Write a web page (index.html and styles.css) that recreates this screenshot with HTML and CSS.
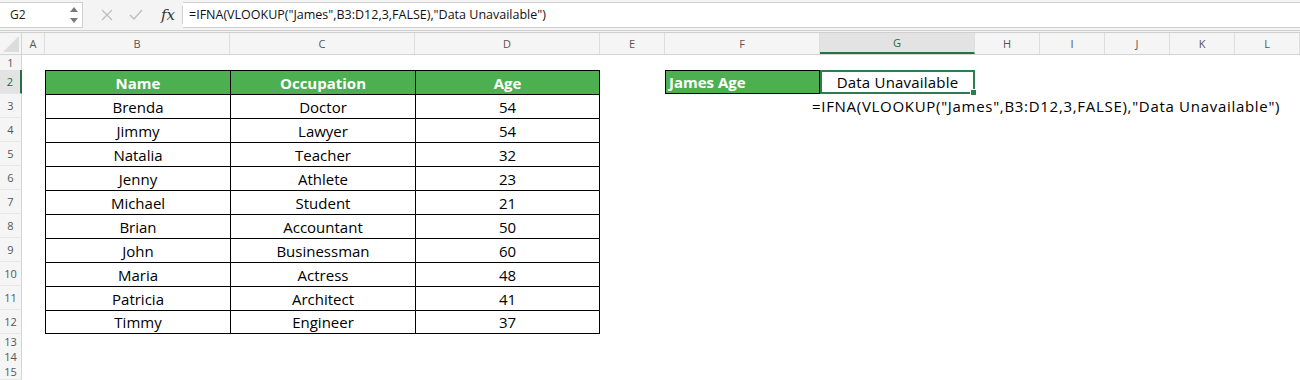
FILE: index.html
```html
<!DOCTYPE html>
<html>
<head>
<meta charset="utf-8">
<link rel="stylesheet" href="styles.css">
</head>
<body>
<div class="app">
  <div class="fbar">
    <div class="namebox">
      <span>G2</span>
      <svg class="spin" width="8" height="18" viewBox="0 0 8 18"><path d="M0 6 L4 1 L8 6 Z" fill="#7a7a7a"/><path d="M0 12 L4 17 L8 12 Z" fill="#7a7a7a"/></svg>
    </div>
    <div class="fbtns">
      <svg class="btn" width="12" height="12" viewBox="0 0 12 12"><path d="M1 1 L11 11 M11 1 L1 11" stroke="#bdbdbd" stroke-width="1.3" fill="none"/></svg>
      <svg class="btn" width="14" height="12" viewBox="0 0 14 12"><path d="M1 6 L5 10 L13 1" stroke="#bdbdbd" stroke-width="1.3" fill="none"/></svg>
      <span class="fx">fx</span>
    </div>
    <div class="finput">=IFNA(VLOOKUP("James",B3:D12,3,FALSE),"Data Unavailable")</div>
  </div>
  <div class="sheet">
    <div class="row colhdr">
      <div class="corner"><svg width="16" height="16" viewBox="0 0 16 16"><path d="M16 0 L16 16 L0 16 Z" fill="#dcdcdc"/></svg></div>
      <div class="ch">A</div><div class="ch">B</div><div class="ch">C</div><div class="ch">D</div><div class="ch">E</div><div class="ch">F</div><div class="ch sel">G</div><div class="ch">H</div><div class="ch">I</div><div class="ch">J</div><div class="ch">K</div><div class="ch">L</div>
    </div>
    <div class="row small"><div class="rh">1</div></div>
    <div class="row tall">
      <div class="rh sel">2</div><div></div>
      <div class="tc th">Name</div><div class="tc th">Occupation</div><div class="tc th last">Age</div>
      <div></div>
      <div class="label">James Age</div>
      <div class="active">Data Unavailable<span class="handle"></span></div>
    </div>
    <div class="row tall">
      <div class="rh">3</div><div></div>
      <div class="tc">Brenda</div><div class="tc">Doctor</div><div class="tc last">54</div>
      <div></div>
      <div class="ftext">=IFNA(VLOOKUP("James",B3:D12,3,FALSE),"Data Unavailable")</div>
    </div>
    <div class="row tall"><div class="rh">4</div><div></div><div class="tc">Jimmy</div><div class="tc">Lawyer</div><div class="tc last">54</div></div>
    <div class="row tall"><div class="rh">5</div><div></div><div class="tc">Natalia</div><div class="tc">Teacher</div><div class="tc last">32</div></div>
    <div class="row tall"><div class="rh">6</div><div></div><div class="tc">Jenny</div><div class="tc">Athlete</div><div class="tc last">23</div></div>
    <div class="row tall"><div class="rh">7</div><div></div><div class="tc">Michael</div><div class="tc">Student</div><div class="tc last">21</div></div>
    <div class="row tall"><div class="rh">8</div><div></div><div class="tc">Brian</div><div class="tc">Accountant</div><div class="tc last">50</div></div>
    <div class="row tall"><div class="rh">9</div><div></div><div class="tc">John</div><div class="tc">Businessman</div><div class="tc last">60</div></div>
    <div class="row tall"><div class="rh">10</div><div></div><div class="tc">Maria</div><div class="tc">Actress</div><div class="tc last">48</div></div>
    <div class="row tall"><div class="rh">11</div><div></div><div class="tc">Patricia</div><div class="tc">Architect</div><div class="tc last">41</div></div>
    <div class="row tall bottom"><div class="rh">12</div><div></div><div class="tc">Timmy</div><div class="tc">Engineer</div><div class="tc last">37</div></div>
    <div class="row small"><div class="rh">13</div></div>
    <div class="row small"><div class="rh">14</div></div>
    <div class="row small"><div class="rh">15</div></div>
  </div>
</div>
</body>
</html>
```
FILE: styles.css
```css
* { box-sizing: border-box; }
html, body { margin: 0; padding: 0; background: #fff; }
body { width: 1300px; height: 380px; overflow: hidden; font-family: "Open Sans", sans-serif; }

.fbar {
  height: 33px;
  display: flex;
  align-items: center;
  background: #f4f4f4;
  padding: 3px 0 4px 0;
  border-bottom: 3px double #cfcfcf;
}
.namebox {
  width: 83px;
  height: 26px;
  background: #fff;
  border: 1px solid #d0d0d0;
  border-left: none;
  display: flex;
  align-items: center;
  justify-content: space-between;
  padding: 0 4px 0 10px;
  font-size: 12px;
  color: #222;
}
.fbtns {
  display: flex;
  align-items: center;
  width: 100px;
  height: 26px;
  padding-left: 18px;
}
.fbtns .btn:first-child { margin-right: 16px; }
.fx {
  margin-left: 18px;
  font-family: "DejaVu Serif", serif;
  font-style: italic;
  font-size: 15px;
  color: #333;
  padding-right: 7px;
  border-right: 1px solid #d0d0d0;
  line-height: 18px;
}
.finput {
  flex: 1;
  height: 26px;
  background: #fff;
  border-top: 1px solid #d0d0d0;
  border-bottom: 1px solid #d0d0d0;
  display: flex;
  align-items: center;
  padding-left: 6px;
  font-size: 12.5px;
  color: #111;
}

.row {
  display: grid;
  grid-template-columns: 22px 23px 185px 185px 185px 65px 155px 155px 65px 65px 65px 65px 65px;
}
.colhdr { height: 22px; background: #f5f5f5; border-bottom: 1px solid #d4d4d4; }
.small { height: 15px; }
.tall { height: 24px; }

.corner {
  display: flex;
  align-items: flex-end;
  justify-content: flex-end;
  padding: 0 2px 2px 0;
  border-right: 1px solid #d4d4d4;
}
.ch {
  display: flex;
  align-items: center;
  justify-content: center;
  font-size: 11px;
  color: #555;
  border-right: 1px solid #dedede;
}
.ch.sel {
  background: #e3e3e3;
  color: #1f6b3e;
  border-bottom: 2px solid #217346;
}
.rh {
  background: #f5f5f5;
  border-right: 1px solid #d4d4d4;
  border-bottom: 1px solid #e6e6e6;
  display: flex;
  align-items: center;
  justify-content: center;
  font-size: 11px;
  color: #555;
}
.rh.sel {
  background: #e3e3e3;
  color: #1f6b3e;
  border-right: 2px solid #217346;
}

.tc {
  border-top: 1px solid #000;
  border-left: 1px solid #000;
  display: flex;
  align-items: center;
  justify-content: center;
  font-size: 15px;
  color: #000;
}
.tc.last { border-right: 1px solid #000; }
.bottom .tc { border-bottom: 1px solid #000; }
.th {
  background: #4caf50;
  color: #fff;
  font-weight: bold;
}
.label {
  background: #4caf50;
  border: 1px solid #000;
  color: #fff;
  font-weight: bold;
  font-size: 15px;
  display: flex;
  align-items: center;
  padding-left: 3px;
}
.active {
  position: relative;
  border: 2px solid #2e7d4f;
  display: flex;
  align-items: center;
  justify-content: center;
  font-size: 15px;
  letter-spacing: 0.2px;
  color: #000;
}
.handle {
  position: absolute;
  right: -4px;
  bottom: -4px;
  width: 5px;
  height: 5px;
  background: #2e7d4f;
  border: 1px solid #fff;
  box-sizing: content-box;
}
.ftext {
  grid-column: 7 / 14;
  padding-left: 147px;
  white-space: nowrap;
  display: flex;
  align-items: center;
  font-size: 15px;
  letter-spacing: 0.7px;
  color: #000;
}
```
